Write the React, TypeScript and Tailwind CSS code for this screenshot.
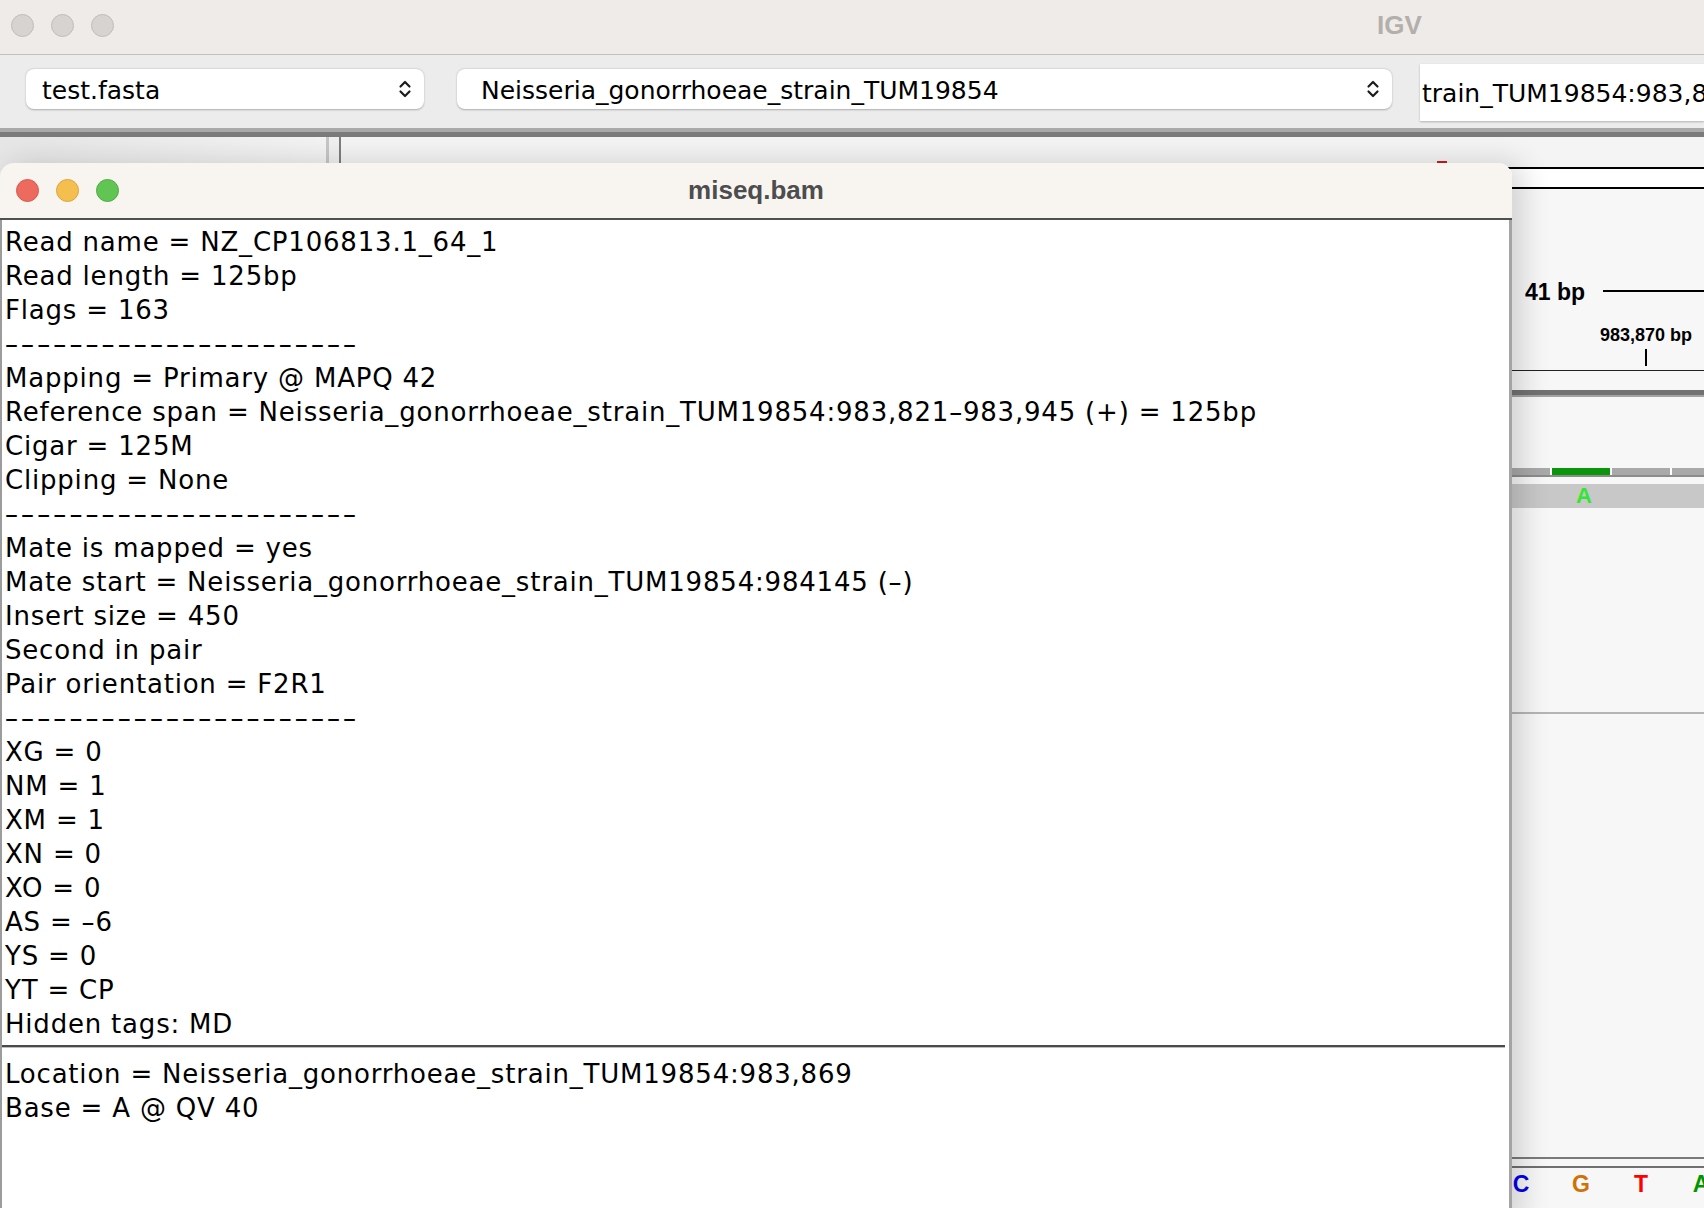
import React from 'react';

const readLines = [
    'Read name = NZ_CP106813.1_64_1',
    'Read length = 125bp',
    'Flags = 163',
    '---',
    'Mapping = Primary @ MAPQ 42',
    'Reference span = Neisseria_gonorrhoeae_strain_TUM19854:983,821–983,945 (+) = 125bp',
    'Cigar = 125M',
    'Clipping = None',
    '---',
    'Mate is mapped = yes',
    'Mate start = Neisseria_gonorrhoeae_strain_TUM19854:984145 (–)',
    'Insert size = 450',
    'Second in pair',
    'Pair orientation = F2R1',
    '---',
    'XG = 0',
    'NM = 1',
    'XM = 1',
    'XN = 0',
    'XO = 0',
    'AS = –6',
    'YS = 0',
    'YT = CP',
    'Hidden tags: MD',
];

const DASHES = '––––––––––––––––––––––';

function Chevrons() {
    return (
        <svg width="14" height="22" viewBox="0 0 14 22" fill="none" stroke="#1c1c1c" strokeWidth="2.2" strokeLinecap="round" strokeLinejoin="round">
            <path d="M2.5 8.5 L7 4 L11.5 8.5" />
            <path d="M2.5 13.5 L7 18 L11.5 13.5" />
        </svg>
    );
}

function Light({ color, border }: { color: string; border: string }) {
    return <div className={`w-[23px] h-[23px] rounded-full border ${color} ${border}`} />;
}

export default function App() {
    return (
        <div className="relative w-[1704px] h-[1208px] overflow-hidden bg-[#f5f5f5] font-['DejaVu_Sans',sans-serif] text-black">
            {/* IGV main window */}
            <div className="flex flex-col h-full">
                {/* title bar */}
                <div className="h-[55px] shrink-0 bg-[#efebe8] border-b border-[#c2c0bd] flex items-center pb-[3px]">
                    <div className="flex gap-[17px] pl-[11px]">
                        <Light color="bg-[#d6d3d0]" border="border-[#c0bdba]" />
                        <Light color="bg-[#d6d3d0]" border="border-[#c0bdba]" />
                        <Light color="bg-[#d6d3d0]" border="border-[#c0bdba]" />
                    </div>
                    <div className="ml-[1263px] font-['Liberation_Sans',sans-serif] font-bold text-[26px] text-[#b3afab]">IGV</div>
                </div>

                {/* toolbar */}
                <div className="h-[73px] shrink-0 bg-[#ececec] flex items-start">
                    <div className="shrink-0 mt-[14px] ml-[26px] w-[398px] h-[40px] bg-white rounded-[8px] shadow-[0_0.5px_2px_rgba(0,0,0,0.28)] flex items-center justify-between pl-[16px] pr-[12px]">
                        <span className="text-[25px] leading-none pt-[2px]">test.fasta</span>
                        <Chevrons />
                    </div>
                    <div className="shrink-0 mt-[14px] ml-[33px] w-[935px] h-[40px] bg-white rounded-[8px] shadow-[0_0.5px_2px_rgba(0,0,0,0.28)] flex items-center justify-between pl-[24px] pr-[12px]">
                        <span className="text-[25px] leading-none pt-[2px]">Neisseria_gonorrhoeae_strain_TUM19854</span>
                        <Chevrons />
                    </div>
                    <div className="mt-[9px] ml-[28px] flex-1 min-w-0 h-[57px] bg-white shadow-[0_1px_2px_rgba(0,0,0,0.25)] flex items-center pl-[2px] overflow-hidden whitespace-nowrap">
                        <span className="text-[25px] leading-none pt-[2px]">train_TUM19854:983,849-983,889</span>
                    </div>
                </div>

                {/* divider */}
                <div className="h-[9px] shrink-0 bg-[#7b7b7b] border-t-[4px] border-[#a9a9a9]" />

                {/* content */}
                <div className="flex-1 flex min-h-0">
                    <div className="shrink-0 w-[329px] bg-gradient-to-r from-[#e6e6e6] to-[#f3f3f3] border-r-[3px] border-[#c6c6c6]" />
                    <div className="shrink-0 w-[12px] bg-[#f0f0f0] border-r-2 border-[#7d7d7d]" />
                    <div className="flex-1 min-w-0 overflow-hidden flex flex-col bg-[#f7f7f7]">
                        <div className="h-[30px] shrink-0 bg-[#f4f4f4] flex items-start">
                            <div className="mt-[24px] ml-[1096px] w-[10px] h-[4px] bg-[#c81e1e]" />
                        </div>
                        <div className="h-[2px] shrink-0 bg-black" />
                        <div className="h-[18px] shrink-0 bg-white" />
                        <div className="h-[2px] shrink-0 bg-black" />

                        {/* ruler */}
                        <div className="mt-[89px] h-[28px] shrink-0 flex items-center font-['Liberation_Sans',sans-serif] font-bold">
                            <span className="shrink-0 pl-[1184px] text-[23px] leading-none whitespace-nowrap">41 bp</span>
                            <div className="ml-[18px] flex-1 h-[2px] bg-black mb-[3px]" />
                        </div>
                        <div className="mt-[18px] h-[22px] shrink-0 flex items-center pl-[1259px] font-['Liberation_Sans',sans-serif] font-bold text-[18px] leading-none whitespace-nowrap">
                            983,870 bp
                        </div>
                        <div className="mt-[3px] ml-[1304px] w-[2px] h-[17px] shrink-0 bg-black" />
                        <div className="mt-[4px] h-px shrink-0 bg-[#222]" />

                        <div className="mt-[19px] h-[7px] shrink-0 bg-[#727272] border-b-2 border-[#a3a3a3]" />

                        {/* coverage */}
                        <div className="mt-[71px] h-[7px] shrink-0 flex gap-[2px] bg-white">
                            <div className="shrink-0 w-[1209px] bg-[#a9a9a9]" />
                            <div className="shrink-0 w-[58px] bg-[#0a960a]" />
                            <div className="shrink-0 w-[58px] bg-[#a9a9a9]" />
                            <div className="flex-1 bg-[#a9a9a9]" />
                        </div>
                        <div className="h-[2px] shrink-0 bg-[#8c8c8c]" />

                        {/* read */}
                        <div className="mt-[7px] h-[24px] shrink-0 bg-[#c8c8c8] flex items-center pl-[1235px] font-['Liberation_Sans',sans-serif] font-bold text-[22px] leading-none text-[#33e633]">
                            A
                        </div>

                        <div className="mt-[204px] h-[2px] shrink-0 bg-[#b5b5b5]" />

                        {/* sequence */}
                        <div className="mt-[443px] h-[2px] shrink-0 bg-[#7a7a7a]" />
                        <div className="mt-[7px] h-[2px] shrink-0 bg-[#707070]" />
                        <div className="mt-[2px] h-[28px] shrink-0 flex items-center pl-[1150px] font-['Liberation_Sans',sans-serif] font-bold text-[23px] leading-none">
                            <span className="shrink-0 w-[60px] text-center text-[#0000f0]">C</span>
                            <span className="shrink-0 w-[60px] text-center text-[#d17105]">G</span>
                            <span className="shrink-0 w-[60px] text-center text-[#ff0000]">T</span>
                            <span className="shrink-0 w-[60px] text-center text-[#009600]">A</span>
                        </div>
                    </div>
                </div>
            </div>

            {/* popup window */}
            <div className="absolute left-0 top-[163px] w-[1512px] h-[1060px] rounded-t-[14px] overflow-hidden flex flex-col shadow-[10px_0_30px_rgba(0,0,0,0.16)]">
                <div className="h-[57px] shrink-0 bg-[#f8f5f1] border-b-2 border-[#505050] relative flex items-center">
                    <div className="flex gap-[17px] pl-[16px]">
                        <Light color="bg-[#ed6a5e]" border="border-[#d65a4f]" />
                        <Light color="bg-[#f5bf4f]" border="border-[#d9a53e]" />
                        <Light color="bg-[#61c554]" border="border-[#50ab44]" />
                    </div>
                    <div className="absolute inset-0 flex items-center justify-center font-['Liberation_Sans',sans-serif] font-bold text-[26px] text-[#4d4d4d]">
                        miseq.bam
                    </div>
                </div>
                <div className="flex-1 bg-white border-l-2 border-[#9c9c9c] border-r-[3px] border-r-[#a4a4a4] pt-[5px] pl-[3px] text-[26px] leading-[34px] tracking-[0.8px] whitespace-nowrap">
                    {readLines.map((line, i) =>
                        line === '---' ? (
                            <div key={i} className="tracking-[3.1px]">{DASHES}</div>
                        ) : (
                            <div key={i}>{line}</div>
                        )
                    )}
                    <div className="mt-[4px] mr-[4px] ml-[-3px] border-t-2 border-[#4a4a4a] border-b border-b-[#bdbdbd]" />
                    <div className="mt-[9px]">Location = Neisseria_gonorrhoeae_strain_TUM19854:983,869</div>
                    <div>Base = A @ QV 40</div>
                </div>
            </div>
        </div>
    );
}
